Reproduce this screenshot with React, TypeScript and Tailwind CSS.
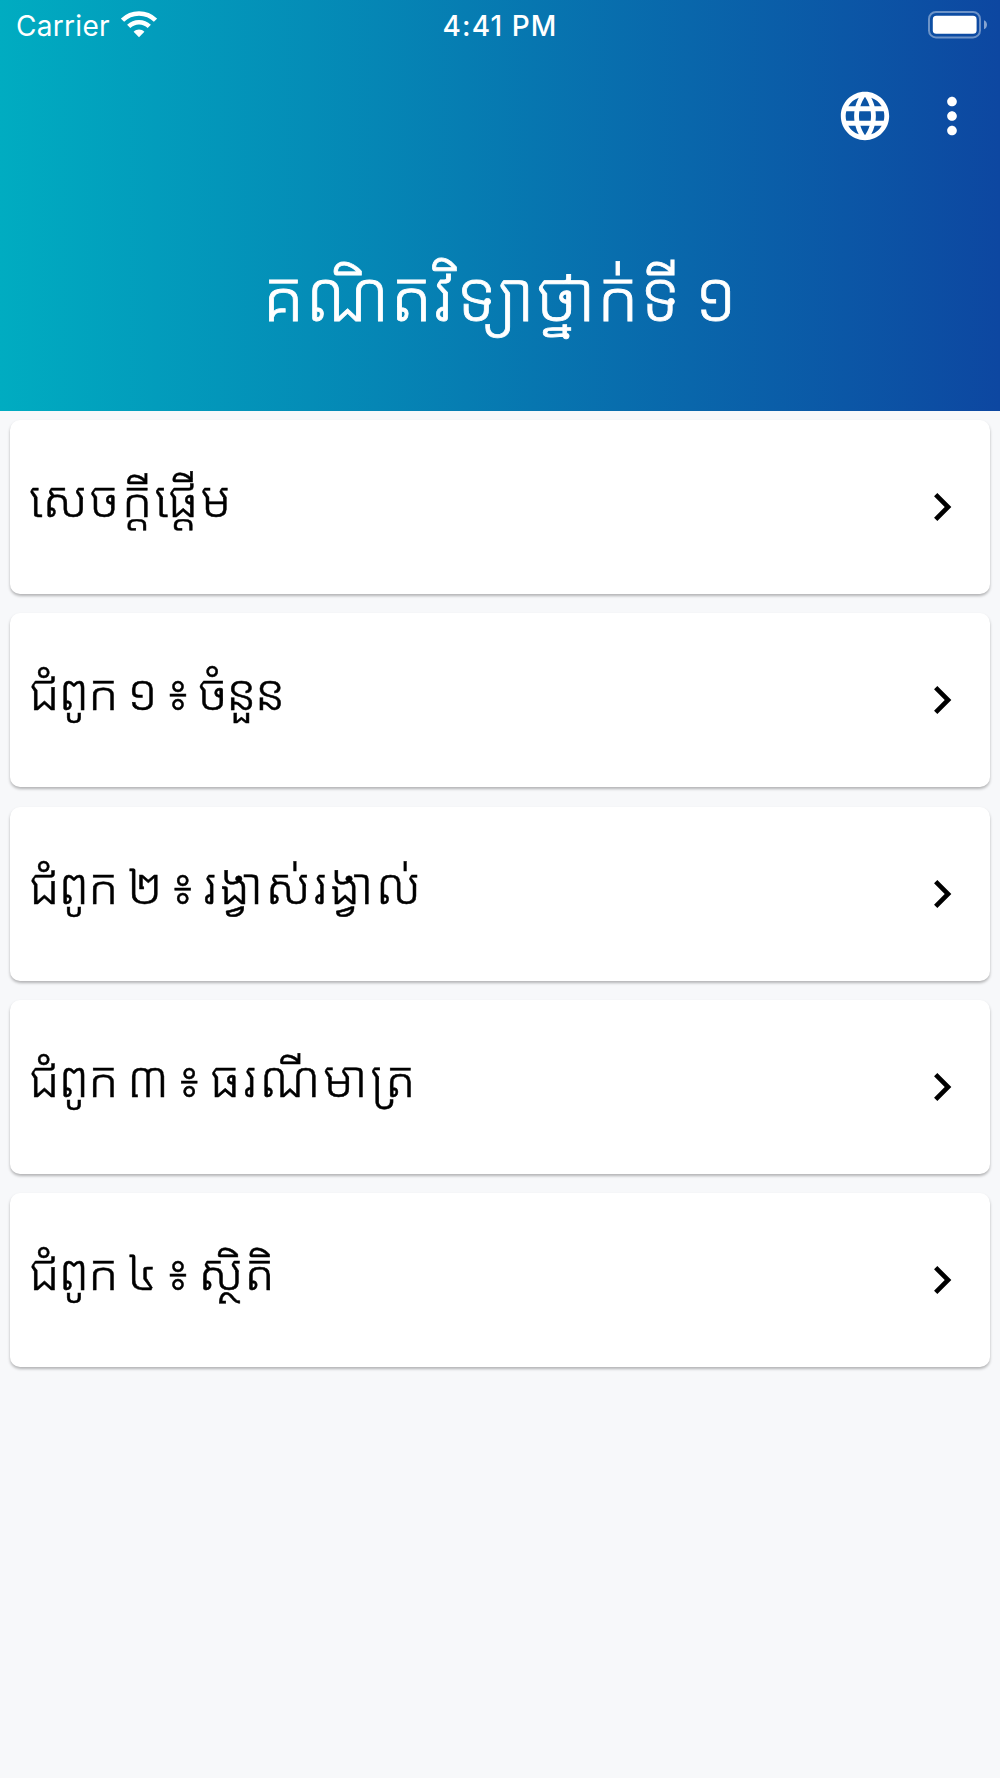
import { MdChevronRight, MdLanguage, MdMoreVert } from 'react-icons/md';

const chapters = [
  { name: 'សេចក្ដីផ្ដើម', spacing: 'tracking-[2.1px]' },
  { prefix: 'ជំពូក ១ ៖ ', name: 'ចំនួន', spacing: 'tracking-[-2px]' },
  { prefix: 'ជំពូក ២ ៖ ', name: 'រង្វាស់រង្វាល់', spacing: 'tracking-[2.4px]' },
  { prefix: 'ជំពូក ៣ ៖ ', name: 'ធរណីមាត្រ', spacing: 'tracking-[2.6px]' },
  { prefix: 'ជំពូក ៤ ៖ ', name: 'ស្ថិតិ', spacing: 'tracking-[0.5px]' }
];

function WifiIcon() {
  return (
    <svg width="36" height="28" viewBox="0 0 36 28" fill="none" stroke="white">
      <path d="M1.5 9.2C10.5 0.2 25.5 0.2 34.5 9.2" strokeWidth="4.6" />
      <path d="M7.7 15.4C13.5 9.8 22.5 9.8 28.3 15.4" strokeWidth="4.6" />
      <path d="M12.6 20.8C15.6 17.8 20.4 17.8 23.4 20.8L18 26.2Z" fill="white" stroke="none" />
    </svg>
  );
}

function BatteryIcon() {
  return (
    <svg width="60" height="28" viewBox="0 0 60 28">
      <rect x="1" y="1" width="51" height="25.4" rx="7" fill="none" stroke="white" strokeOpacity="0.4" strokeWidth="2" />
      <rect x="4.8" y="4.8" width="43.8" height="18" rx="3.6" fill="white" />
      <path d="M56 9.2c4 1.6 4 7.4 0 9z" fill="white" fillOpacity="0.5" />
    </svg>
  );
}

function StatusBar() {
  return (
    <div className="grid grid-cols-3 h-[50px] pl-4 pr-[12px]">
      <div className="flex items-center gap-[11px] h-[49px]">
        <span className="text-[28px] leading-[50px] tracking-[0.3px] pt-[3px]">Carrier</span>
        <WifiIcon />
      </div>
      <div className="text-center text-[28px] leading-[52px] font-medium tracking-[1.1px] pr-1">4:41 PM</div>
      <div className="flex items-center justify-end h-[49px]">
        <BatteryIcon />
      </div>
    </div>
  );
}

function ChapterCard({ prefix, name, spacing }: { prefix?: string; name: string; spacing: string }) {
  return (
    <button className="flex items-center justify-between h-[174px] w-full rounded-[10px] bg-white pl-[19px] pr-[20px] text-left shadow-[0_2px_3px_rgba(0,0,0,0.28)]">
      <span className="pb-4 text-[50px] leading-[80px] font-light whitespace-pre [word-spacing:-3.5px] [-webkit-text-stroke:0.5px_black] text-black">
        {prefix && <span className="tracking-[-1.2px]">{prefix}</span>}
        <span className={spacing}>{name}</span>
      </span>
      <MdChevronRight className="size-[56px] text-black" />
    </button>
  );
}

export default function App() {
  return (
    <main className="min-h-[1778px] bg-[#f7f8fa] font-['Inter','Noto_Sans_Khmer','Noto_Sans',sans-serif]">
      <header className="h-[411px] bg-linear-to-r/srgb from-[#00acc1] to-[#0d47a1] text-white">
        <StatusBar />
        <div className="flex items-center justify-end gap-[29px] h-[132px] pr-[19.5px]">
          <MdLanguage className="size-[58px]" />
          <MdMoreVert className="size-[58px]" />
        </div>
        <h1 className="text-center text-[69px] leading-[229px] h-[229px] font-light tracking-[0.8px] [word-spacing:-7px] [-webkit-text-stroke:0.8px_white]">
          គណិតវិទ្យាថ្នាក់ទី ១
        </h1>
      </header>

      <div className="flex flex-col gap-[19.3px] px-[10px] pt-[9px]">
        {chapters.map((chapter) => (
          <ChapterCard key={chapter.name} {...chapter} />
        ))}
      </div>
    </main>
  );
}
